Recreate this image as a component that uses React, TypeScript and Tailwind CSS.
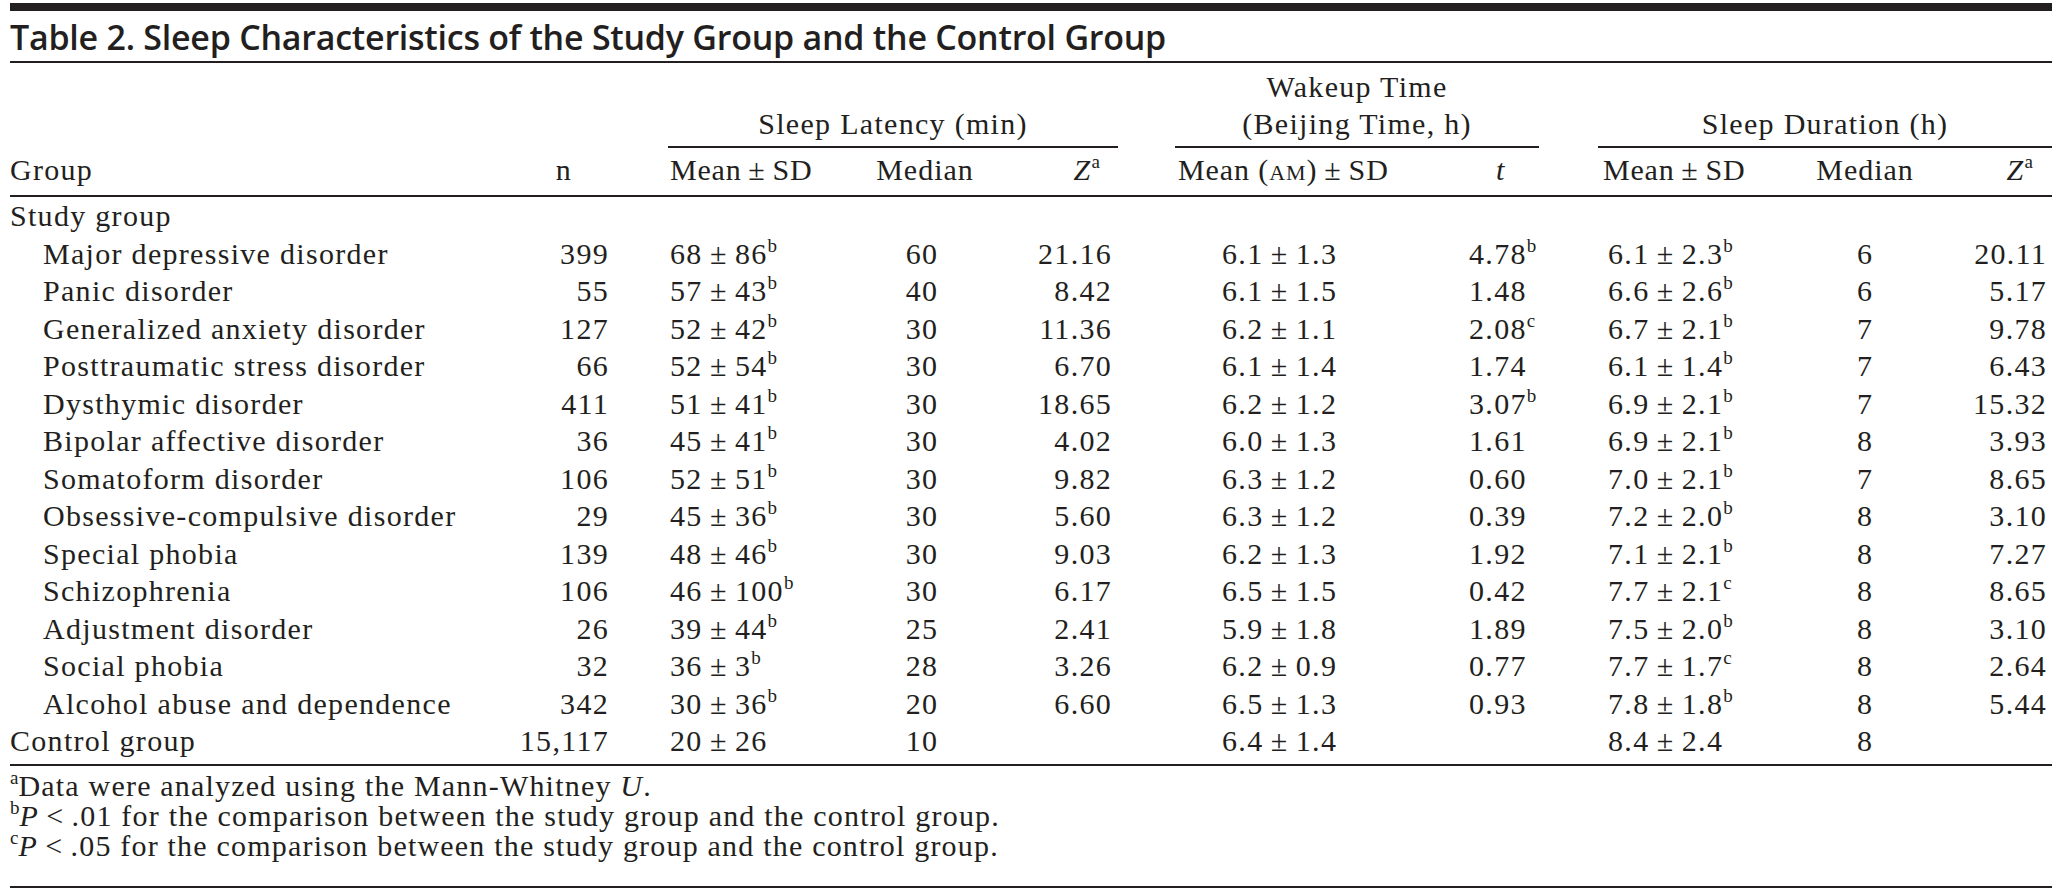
import React from "react";

const PM = "\u2009\u00b1\u2009";

type Row = {
  name: string;
  n: string;
  slm: string;
  sls?: string;
  slmed: string;
  slz: string;
  wtm: string;
  wtt: string;
  wts?: string;
  sdm: string;
  sds?: string;
  sdmed: string;
  sdz: string;
};

const r = (
  name: string,
  n: string,
  slm: string,
  sls: string | undefined,
  slmed: string,
  slz: string,
  wtm: string,
  wtt: string,
  wts: string | undefined,
  sdm: string,
  sds: string | undefined,
  sdmed: string,
  sdz: string
): Row => ({ name, n, slm, sls, slmed, slz, wtm, wtt, wts, sdm, sds, sdmed, sdz });

const rows: Row[] = [
  r("Major depressive disorder", "399", `68${PM}86`, "b", "60", "21.16", `6.1${PM}1.3`, "4.78", "b", `6.1${PM}2.3`, "b", "6", "20.11"),
  r("Panic disorder", "55", `57${PM}43`, "b", "40", "8.42", `6.1${PM}1.5`, "1.48", undefined, `6.6${PM}2.6`, "b", "6", "5.17"),
  r("Generalized anxiety disorder", "127", `52${PM}42`, "b", "30", "11.36", `6.2${PM}1.1`, "2.08", "c", `6.7${PM}2.1`, "b", "7", "9.78"),
  r("Posttraumatic stress disorder", "66", `52${PM}54`, "b", "30", "6.70", `6.1${PM}1.4`, "1.74", undefined, `6.1${PM}1.4`, "b", "7", "6.43"),
  r("Dysthymic disorder", "411", `51${PM}41`, "b", "30", "18.65", `6.2${PM}1.2`, "3.07", "b", `6.9${PM}2.1`, "b", "7", "15.32"),
  r("Bipolar affective disorder", "36", `45${PM}41`, "b", "30", "4.02", `6.0${PM}1.3`, "1.61", undefined, `6.9${PM}2.1`, "b", "8", "3.93"),
  r("Somatoform disorder", "106", `52${PM}51`, "b", "30", "9.82", `6.3${PM}1.2`, "0.60", undefined, `7.0${PM}2.1`, "b", "7", "8.65"),
  r("Obsessive-compulsive disorder", "29", `45${PM}36`, "b", "30", "5.60", `6.3${PM}1.2`, "0.39", undefined, `7.2${PM}2.0`, "b", "8", "3.10"),
  r("Special phobia", "139", `48${PM}46`, "b", "30", "9.03", `6.2${PM}1.3`, "1.92", undefined, `7.1${PM}2.1`, "b", "8", "7.27"),
  r("Schizophrenia", "106", `46${PM}100`, "b", "30", "6.17", `6.5${PM}1.5`, "0.42", undefined, `7.7${PM}2.1`, "c", "8", "8.65"),
  r("Adjustment disorder", "26", `39${PM}44`, "b", "25", "2.41", `5.9${PM}1.8`, "1.89", undefined, `7.5${PM}2.0`, "b", "8", "3.10"),
  r("Social phobia", "32", `36${PM}3`, "b", "28", "3.26", `6.2${PM}0.9`, "0.77", undefined, `7.7${PM}1.7`, "c", "8", "2.64"),
  r("Alcohol abuse and dependence", "342", `30${PM}36`, "b", "20", "6.60", `6.5${PM}1.3`, "0.93", undefined, `7.8${PM}1.8`, "b", "8", "5.44"),
];

const control: Row = r("Control group", "15,117", `20${PM}26`, undefined, "10", "", `6.4${PM}1.4`, "", undefined, `8.4${PM}2.4`, undefined, "8", "");

function Sup({ c }: { c?: string }) {
  if (!c) return null;
  return <sup className="text-[19px] top-[-12px] tracking-normal">{c}</sup>;
}

function BodyRow({ row, indent, last }: { row: Row; indent: boolean; last?: boolean }) {
  const cell = `align-top leading-[37.5px] p-0 whitespace-nowrap ${last ? "pb-[4px] border-b-2 border-[#231f20]" : ""}`;
  return (
    <tr>
      <td className={`${cell} ${indent ? "pl-[33px]" : "pl-0"}`}>{row.name}</td>
      <td className={`${cell} text-right pr-[3px]`}>{row.n}</td>
      <td className={cell}></td>
      <td className={`${cell} pl-[2px]`}>
        {row.slm}
        <Sup c={row.sls} />
      </td>
      <td className={`${cell} text-center pr-[6px]`}>{row.slmed}</td>
      <td className={`${cell} text-right pr-[6px]`}>{row.slz}</td>
      <td className={cell}></td>
      <td className={`${cell} pl-[47px]`}>{row.wtm}</td>
      <td className={`${cell} pl-[29px]`}>
        {row.wtt}
        <Sup c={row.wts} />
      </td>
      <td className={cell}></td>
      <td className={`${cell} pl-[10px]`}>
        {row.sdm}
        <Sup c={row.sds} />
      </td>
      <td className={`${cell} text-center`}>{row.sdmed}</td>
      <td className={`${cell} text-right pr-[5px]`}>{row.sdz}</td>
    </tr>
  );
}

export default function App() {
  const h2 = "p-0 align-top leading-[44px] border-b-2 border-[#231f20] whitespace-nowrap font-normal";
  const grp = "p-0 align-bottom leading-[37px] pb-[4px] border-b-2 border-[#231f20] text-center font-normal whitespace-nowrap";
  return (
    <div className="bg-white w-[2061px] h-[889px] overflow-hidden text-[#231f20]">
      <div className="ml-[10px] w-[2042px] pt-[3px]">
        <div className="h-[8px] bg-[#231f20]" />
        <div className="font-['Open_Sans',sans-serif] font-semibold text-[34px] tracking-[-0.25px] pt-[3px] leading-[47px] border-b-2 border-[#231f20] whitespace-nowrap">
          Table 2. Sleep Characteristics of the Study Group and the Control Group
        </div>
        <div className="font-['Liberation_Serif','Times_New_Roman',serif] text-[30px] tracking-[1.3px]">
          <table className="table-fixed w-[2042px] border-separate border-spacing-0">
            <colgroup>
              <col className="w-[490px]" />
              <col className="w-[112px]" />
              <col className="w-[56px]" />
              <col className="w-[192px]" />
              <col className="w-[130px]" />
              <col className="w-[128px]" />
              <col className="w-[57px]" />
              <col className="w-[265px]" />
              <col className="w-[99px]" />
              <col className="w-[59px]" />
              <col className="w-[192px]" />
              <col className="w-[150px]" />
              <col className="w-[112px]" />
            </colgroup>
            <thead>
              <tr className="h-[85px]">
                <th className="p-0" colSpan={3}></th>
                <th className={grp} colSpan={3}>
                  Sleep Latency (min)
                </th>
                <th className="p-0"></th>
                <th className={grp} colSpan={2}>
                  Wakeup Time
                  <br />
                  (Beijing Time, h)
                </th>
                <th className="p-0"></th>
                <th className={grp} colSpan={3}>
                  Sleep Duration (h)
                </th>
              </tr>
              <tr>
                <th className={`${h2} text-left`}>Group</th>
                <th className={`${h2} text-right pr-[40px]`}>n</th>
                <th className={h2}></th>
                <th className={`${h2} text-left pl-[2px] tracking-[0.8px]`}>Mean{PM}SD</th>
                <th className={`${h2} text-center tracking-[1px]`}>Median</th>
                <th className={`${h2} text-right pr-[18px]`}>
                  <span className="italic">Z</span>
                  <Sup c="a" />
                </th>
                <th className={h2}></th>
                <th className={`${h2} text-left pl-[3px] tracking-[0.9px]`}>
                  Mean (<span className="text-[22px]">AM</span>){PM}SD
                </th>
                <th className={`${h2} text-left pl-[56px]`}>
                  <span className="italic">t</span>
                </th>
                <th className={h2}></th>
                <th className={`${h2} text-left pl-[5px] tracking-[0.8px]`}>Mean{PM}SD</th>
                <th className={`${h2} text-center tracking-[1px]`}>Median</th>
                <th className={`${h2} text-right pr-[19px]`}>
                  <span className="italic">Z</span>
                  <Sup c="a" />
                </th>
              </tr>
            </thead>
            <tbody>
              <tr>
                <td className="align-top leading-[37.5px] p-0 whitespace-nowrap" colSpan={13}>
                  Study group
                </td>
              </tr>
              {rows.map((row) => (
                <BodyRow key={row.name} row={row} indent />
              ))}
              <BodyRow row={control} indent={false} last />
            </tbody>
          </table>
          <div className="pt-[5px] pb-[25px] leading-[30px] border-b-2 border-[#231f20] tracking-[1.2px]">
            <div>
              <Sup c="a" />
              Data were analyzed using the Mann-Whitney <span className="italic">U</span>.
            </div>
            <div>
              <Sup c="b" />
              <span className="italic">P</span>
              {"\u2009<\u2009"}.01 for the comparison between the study group and the control group.
            </div>
            <div>
              <Sup c="c" />
              <span className="italic">P</span>
              {"\u2009<\u2009"}.05 for the comparison between the study group and the control group.
            </div>
          </div>
        </div>
      </div>
    </div>
  );
}
